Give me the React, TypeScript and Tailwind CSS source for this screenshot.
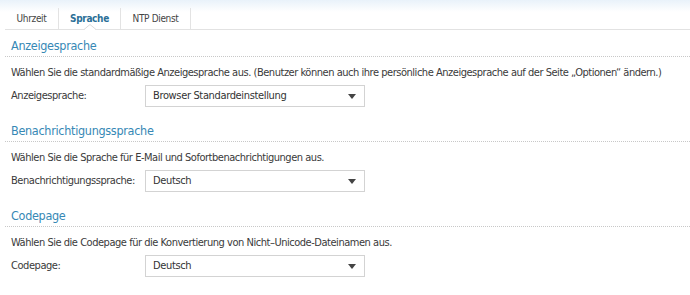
import { useState } from "react";

const tabs = ["Uhrzeit", "Sprache", "NTP Dienst"];

const tabWidths = ["w-[54px]", "w-[62px]", "w-[70px]"];

const sections = [
  {
    title: "Anzeigesprache",
    desc: "Wählen Sie die standardmäßige Anzeigesprache aus. (Benutzer können auch ihre persönliche Anzeigesprache auf der Seite „Optionen“ ändern.)",
    label: "Anzeigesprache:",
    value: "Browser Standardeinstellung",
  },
  {
    title: "Benachrichtigungssprache",
    desc: "Wählen Sie die Sprache für E-Mail und Sofortbenachrichtigungen aus.",
    label: "Benachrichtigungssprache:",
    value: "Deutsch",
  },
  {
    title: "Codepage",
    desc: "Wählen Sie die Codepage für die Konvertierung von Nicht–Unicode-Dateinamen aus.",
    label: "Codepage:",
    value: "Deutsch",
  },
];

const Select = ({ value }: { value: string }) => (
  <div className="flex items-center justify-between w-[220px] h-[22px] border border-[#d3d3d3] bg-white pl-[7px] pr-[8px] text-[11px] tracking-[-0.35px] text-[#333]">
    <span>{value}</span>
    <svg width="8" height="5" viewBox="0 0 8 5">
      <path d="M0 0 H8 L4 5 Z" fill="#444" />
    </svg>
  </div>
);

const App = () => {
  const [active, setActive] = useState(1);

  return (
    <div
      className="w-[690px] h-[295px] overflow-hidden bg-white"
      style={{ fontFamily: '"DejaVu Sans Condensed", "DejaVu Sans", Tahoma, sans-serif' }}
    >
      {/* Tabs */}
      <div className="bg-gradient-to-b from-[#e9f2fa] to-white to-[40%] pt-[8px] pl-[5px]">
        <div className="flex border-b border-[#e2e2e2] h-[22px]">
          {tabs.map((t, i) => (
            <button
              key={t}
              onClick={() => setActive(i)}
              className={`relative ${tabWidths[i]} h-[21px] flex items-start justify-center pt-[3px] text-[10px] tracking-[-0.35px] border-r border-[#e3e3e3] ${
                active === i ? "font-bold text-[#2b6f97]" : "text-[#444]"
              }`}
            >
              {t}
              {active === i && (
                <svg className="absolute left-1/2 -translate-x-1/2 bottom-[-1px]" width="12" height="6" viewBox="0 0 12 6">
                  <path d="M0 6 L6 0 L12 6 Z" fill="#fff" />
                  <path d="M0 5.5 L6 0.5 L12 5.5" fill="none" stroke="#dcdcdc" />
                </svg>
              )}
            </button>
          ))}
        </div>
      </div>

      {/* Sections */}
      <div className="pt-[6px] pl-[5px]">
        {sections.map((s) => (
          <section key={s.title} className="mb-[14px]">
            <h2 className="h-[21px] leading-[20px] pl-[6px] text-[12.5px] tracking-[-0.3px] text-[#3688b5] border-b border-dotted border-[#c8c8c8]">
              {s.title}
            </h2>
            <p className="mt-[8px] pl-[6px] leading-[16px] text-[11px] tracking-[-0.47px] text-[#3a3a3a] whitespace-nowrap">
              {s.desc}
            </p>
            <div className="mt-[4px] pl-[6px] flex items-center">
              <span className="w-[134px] text-[11px] tracking-[-0.45px] text-[#3a3a3a]">{s.label}</span>
              <Select value={s.value} />
            </div>
          </section>
        ))}
      </div>
    </div>
  );
};

export default App;
